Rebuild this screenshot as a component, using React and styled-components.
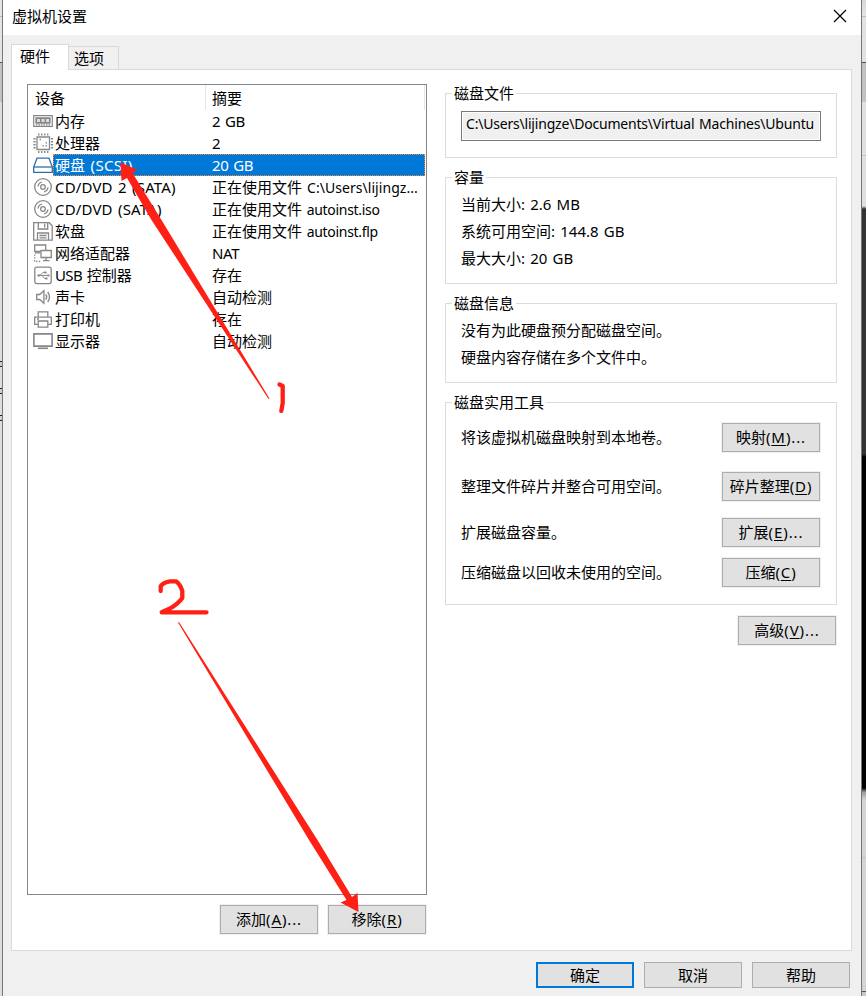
import React from 'react';
import styled, { createGlobalStyle, css } from 'styled-components';

const GlobalStyle = createGlobalStyle`
  * {
    box-sizing: border-box;
  }

  body {
    margin: 0;
    background: #e2e2e2;
    color: #000;
    font-family: 'Noto Sans CJK SC', sans-serif;
    font-size: 15px;
    line-height: 22px;
    white-space: nowrap;
  }
`;

const Desktop = styled.div`
  position: relative;
  display: flex;
  width: 866px;
  height: 996px;
  overflow: hidden;
`;

const LeftEdge = styled.div`
  flex: none;
  width: 3px;
  border-right: 1px solid #777;
  background: linear-gradient(
    #e4e4e4 0 16px, #bbb 16px 17px, #e4e4e4 17px 62px, #555 62px 63px,
    #c2c2c2 63px 102px, #dedede 102px 361px,
    #222 361px 362px, #bcd5d2 362px 366px, #222 366px 367px, #dedede 367px 388px,
    #222 388px 389px, #bcd5d2 389px 393px, #222 393px 394px, #dedede 394px 415px,
    #222 415px 416px, #bcd5d2 416px 420px, #222 420px 421px, #dedede 421px
  );
`;

const RightEdge = styled.div`
  flex: none;
  width: 5px;
  border-left: 1px solid #777;
  background: linear-gradient(
    #d8d8d8 0, #e4e4e4 16px, #bbb 16px 17px, #e2e2e2 17px 62px, #555 62px 63px,
    #c2c2c2 63px 102px, #e0e0e0 102px 155px, #c4c4c4 155px 156px, #e0e0e0 156px 206px,
    #333 209px 454px, #000 457px 788px, #999 792px, #d4d4d4 800px 857px,
    #c0c0c0 857px 858px, #d4d4d4 858px 991px, #555 991px 992px, #c8c8c8 992px
  );
`;

const Dialog = styled.div`
  display: flex;
  flex-direction: column;
  width: 858px;
  background: #f0f0f0;
`;

const TitleBar = styled.div`
  display: flex;
  justify-content: space-between;
  height: 35px;
  padding: 5px 14px 0 9px;
  background: #fff;
`;

const CloseIcon = styled.svg`
  width: 14px;
  height: 14px;
  margin-top: 4px;
`;

const Tabs = styled.div`
  display: flex;
  align-items: flex-end;
  height: 34px;
  padding-left: 8px;
`;

const Tab = styled.div`
  border: 1px solid #d9d9d9;
  border-bottom: none;
  ${(props) =>
    props.$active
      ? css`
          z-index: 1;
          width: 58px;
          height: 26px;
          margin-bottom: -1px;
          padding: 0 8px;
          background: #fff;
        `
      : css`
          width: 50px;
          height: 23px;
          padding: 0 5px;
          border-left: none;
        `}
`;

const Panel = styled.div`
  display: flex;
  gap: 18px;
  width: 841px;
  height: 882px;
  margin-left: 8px;
  padding: 14px 0 0 15px;
  border: 1px solid #d9d9d9;
  background: #fff;
`;

const DeviceColumn = styled.div`
  width: 400px;
`;

const DeviceList = styled.div`
  height: 811px;
  border: 1px solid #828790;
`;

const ListHeader = styled.div`
  display: flex;
  height: 25px;
  padding: 2px 0 0 7px;
  background: linear-gradient(#e5e5e5, #e5e5e5) 177px 0 / 1px 25px no-repeat,
    linear-gradient(#e5e5e5, #e5e5e5) 396px 0 / 1px 25px no-repeat;
`;

const HeaderCell = styled.span`
  width: ${(props) => props.$width}px;
`;

const Row = styled.div`
  display: flex;
  height: 22px;
  padding: 0 1px 0 5px;
`;

const DeviceIcon = styled.svg`
  flex: none;
  width: 21px;
  height: 22px;
  margin-right: -1px;
  fill: none;
  stroke: ${(props) => (props.$selected ? '#2f6fa8' : '#878787')};
  stroke-width: 1.3;
`;

const RowLabel = styled.div`
  display: flex;
  flex: 1;
  height: 22px;
  padding-left: 2px;
  line-height: 21px;
  ${(props) =>
    props.$selected &&
    css`
      color: #fff;
      background: #0078d7;
      outline: 1px dotted #ff8728;
      outline-offset: -1px;
    `}
`;

const DeviceName = styled.span`
  width: 157px;
`;

const Actions = styled.div`
  display: flex;
  justify-content: flex-end;
  gap: 10px;
  margin-top: ${(props) => props.$top}px;
  padding-right: 1px;
`;

const Button = styled.button`
  flex: none;
  width: 98px;
  height: ${(props) => (props.$footer ? 26 : 29)}px;
  padding: ${(props) => (props.$footer ? 0 : '0 0 2px')};
  border: ${(props) => (props.$primary ? '2px solid #0078d7' : '1px solid #adadad')};
  box-shadow: 0 0 0 1px #f0f0f0;
  background: #e1e1e1;
  color: #000;
  font: inherit;
  line-height: 20px;
`;

const Details = styled.div`
  display: flex;
  flex-direction: column;
  width: 392px;
  padding-top: 9px;
`;

const Group = styled.div`
  height: ${(props) => props.$height}px;
  margin-bottom: ${(props) => props.$gap}px;
  border: 1px solid #dcdcdc;
`;

const Legend = styled.div`
  width: fit-content;
  height: 22px;
  margin: -12px 0 0 6px;
  padding: 0 2px;
  background: #fff;
`;

const PathField = styled.div`
  width: 360px;
  height: 30px;
  margin: 7px 0 0 15px;
  padding: 0 4px;
  border: 1px solid #7a7a7a;
  box-shadow: inset 0 0 0 1px #fff;
  background: #f0f0f0;
`;

const InfoLine = styled.div`
  height: 27px;
  padding: 5px 0 0 15px;
  line-height: 21px;
`;

const ToolRow = styled.div`
  display: flex;
  align-items: center;
  justify-content: space-between;
  height: 29px;
  margin-top: ${(props) => props.$top}px;
  padding: 0 16px 0 15px;
`;

const ToolText = styled.span`
  padding-bottom: 2px;
`;

const Footer = styled.div`
  display: flex;
  justify-content: flex-end;
  gap: 10px;
  padding: 11px 11px 0 0;
`;

const Latin = styled.span`
  font-family: 'Noto Sans', sans-serif;
  font-size: ${(props) => props.$size || 15}px;
  line-height: 18px;
  letter-spacing: ${(props) => props.$spacing || 0}px;
  word-spacing: 1.3px;
`;

const Key = styled.span`
  text-decoration: underline;
  text-underline-offset: 2px;
`;

const Annotation = styled.svg`
  position: absolute;
  inset: 0;
  pointer-events: none;
`;

// Latin runs have their own face, size and spacing inside the Chinese text
function Text({ children, size, spacing }) {
  return children.split(/([\x20-\x7e]+)/).map((part, index) =>
    /^[\x20-\x7e]+$/.test(part) ? (
      <Latin key={index} $size={size} $spacing={spacing}>
        {part}
      </Latin>
    ) : (
      part
    )
  );
}

function KeyButton({ label, hotkey, more, ...props }) {
  return (
    <Button {...props}>
      {label}
      {hotkey && (
        <Latin $spacing={0.9}>
          (<Key>{hotkey}</Key>){more && '...'}
        </Latin>
      )}
    </Button>
  );
}

const disc = (
  <>
    <circle cx="10" cy="11" r="8.3" />
    <circle cx="10" cy="11" r="2.3" />
    <path d="M5 10.5Q5.5 7 9 6M15 11.5Q14.5 15 11 16" />
  </>
);

const icons = {
  memory: (
    <>
      <path d="M.7 5.7h18.6v10.6H.7z" strokeWidth="1.2" />
      <path d="M3 8h14v5H3z" fill="#878787" />
      <path d="M4 9h3v3H4zM8.5 9h3v3h-3zM13 9h3v3h-3z" fill="#ddd" stroke="none" />
      <path d="M3 14.8h14" strokeDasharray="1.5 1" />
    </>
  ),
  cpu: (
    <>
      <path d="M4 5h12.5v12.5H4z" />
      <path d="M5 2.5h11M5 20h11M1.5 6v11M19 6v11" strokeWidth="2.2" strokeDasharray="1.4 1.6" />
      <path d="M6.5 7.5h1.5M12.5 13.8H14M12.5 10.8H14M9.5 13.8H11" />
    </>
  ),
  hdd: (
    <>
      <path d="M4 4.2h12L19.3 13v5.3H.7V13z" fill="#fff" />
      <path d="M.7 13h18.6" />
    </>
  ),
  disc,
  floppy: (
    <>
      <path d="M.7 2.7h15.5l3 3v14.5H.7z" />
      <path d="M5.3 3v6h9.4V3M11.7 3.5v4M4.5 20v-7h11v7M6.5 15.5h7M6.5 17.8h7" />
    </>
  ),
  network: (
    <>
      <path d="M1.7 3h11v6.5h-11z" />
      <path d="M8 8.5h10.3v7H8z" fill="#fff" />
      <path d="M13 16v2.3M10 18.7h6.5M2 10.8h5" />
      <path d="M1.7 12.5v7h7" strokeDasharray="1.3 1.5" />
    </>
  ),
  usb: (
    <>
      <rect x="1.8" y="3.2" width="16.4" height="16.4" rx="2" />
      <path d="M5 11.4h10M7 11.4l3-3h2M9 11.4l2.5 3h1.5" strokeWidth="1" />
      <path d="M3.8 11.4 6.5 9.8v3.2zM11.5 7.5h2v2h-2zM12.5 13.5h2v2h-2zM14.5 10.4h2v2h-2z" fill="#878787" stroke="none" />
    </>
  ),
  sound: (
    <>
      <path d="M3.7 8.5h3l4.2-3.8v12.6L6.7 13.5h-3z" />
      <path d="M12.7 8.3q2 2.7 0 5.4M14.7 6q3.6 5 0 10" />
    </>
  ),
  printer: (
    <>
      <path d="M5.2 9V3.8h9.6V9M5 16.3H1.7V9.2h16.6v7.1H15" />
      <path d="M5.2 13h9.6v6.2H5.2zM4 11h2" />
    </>
  ),
  display: (
    <>
      <path d="M.9 3.9h18.2v12.2H.9z" strokeWidth="1.6" />
      <path d="M5 18.3h10" strokeWidth="1.6" />
    </>
  ),
};

const devices = [
  { icon: 'memory', name: '内存', summary: '2 GB' },
  { icon: 'cpu', name: '处理器', summary: '2' },
  { icon: 'hdd', name: '硬盘 (SCSI)', summary: '20 GB', selected: true },
  { icon: 'disc', name: 'CD/DVD 2 (SATA)', summary: '正在使用文件 C:\\Users\\lijingz...', size: 14, spacing: 0.05 },
  { icon: 'disc', name: 'CD/DVD (SATA)', summary: '正在使用文件 autoinst.iso', size: 14, spacing: -0.3 },
  { icon: 'floppy', name: '软盘', summary: '正在使用文件 autoinst.flp', size: 14, spacing: -0.3 },
  { icon: 'network', name: '网络适配器', summary: 'NAT' },
  { icon: 'usb', name: 'USB 控制器', summary: '存在' },
  { icon: 'sound', name: '声卡', summary: '自动检测' },
  { icon: 'printer', name: '打印机', summary: '存在' },
  { icon: 'display', name: '显示器', summary: '自动检测' },
];

// Letter spacing of the names whose Latin part is long or narrow
const nameSpacing = { hdd: 0.35, disc: 0.15, usb: -0.6 };

const tools = [
  { text: '将该虚拟机磁盘映射到本地卷。', label: '映射', hotkey: 'M', more: true, top: 10 },
  { text: '整理文件碎片并整合可用空间。', label: '碎片整理', hotkey: 'D', top: 20 },
  { text: '扩展磁盘容量。', label: '扩展', hotkey: 'E', more: true, top: 17 },
  { text: '压缩磁盘以回收未使用的空间。', label: '压缩', hotkey: 'C', top: 11 },
];

function App() {
  return (
    <Desktop>
      <GlobalStyle />
      <LeftEdge />
      <Dialog>
        <TitleBar>
          虚拟机设置
          <CloseIcon viewBox="0 0 14 14">
            <path d="M1 1l12 12M13 1L1 13" stroke="#000" strokeWidth="1.2" />
          </CloseIcon>
        </TitleBar>
        <Tabs>
          <Tab $active>硬件</Tab>
          <Tab>选项</Tab>
        </Tabs>
        <Panel>
          <DeviceColumn>
            <DeviceList>
              <ListHeader>
                <HeaderCell $width={177}>设备</HeaderCell>
                <HeaderCell $width={180}>摘要</HeaderCell>
              </ListHeader>
              {devices.map((device) => (
                <Row key={device.name}>
                  <DeviceIcon viewBox="0 0 21 22" $selected={device.selected}>
                    {icons[device.icon]}
                  </DeviceIcon>
                  <RowLabel $selected={device.selected}>
                    <DeviceName>
                      <Text spacing={nameSpacing[device.icon]}>{device.name}</Text>
                    </DeviceName>
                    <span>
                      <Text size={device.size} spacing={device.spacing || -0.4}>
                        {device.summary}
                      </Text>
                    </span>
                  </RowLabel>
                </Row>
              ))}
            </DeviceList>
            <Actions $top={10}>
              <KeyButton label="添加" hotkey="A" more />
              <KeyButton label="移除" hotkey="R" />
            </Actions>
          </DeviceColumn>
          <Details>
            <Group $height={65} $gap={19}>
              <Legend>磁盘文件</Legend>
              <PathField>
                <Text size={14} spacing={-0.2}>
                  {'C:\\Users\\lijingze\\Documents\\Virtual Machines\\Ubuntu'}
                </Text>
              </PathField>
            </Group>
            <Group $height={107} $gap={19}>
              <Legend>容量</Legend>
              <InfoLine>
                <Text>当前大小: 2.6 MB</Text>
              </InfoLine>
              <InfoLine>
                <Text>系统可用空间: 144.8 GB</Text>
              </InfoLine>
              <InfoLine>
                <Text>最大大小: 20 GB</Text>
              </InfoLine>
            </Group>
            <Group $height={80} $gap={19}>
              <Legend>磁盘信息</Legend>
              <InfoLine>没有为此硬盘预分配磁盘空间。</InfoLine>
              <InfoLine>硬盘内容存储在多个文件中。</InfoLine>
            </Group>
            <Group $height={203} $gap={11}>
              <Legend>磁盘实用工具</Legend>
              {tools.map(({ text, top, ...button }) => (
                <ToolRow key={text} $top={top}>
                  <ToolText>{text}</ToolText>
                  <KeyButton {...button} />
                </ToolRow>
              ))}
            </Group>
            <Actions $top={0}>
              <KeyButton label="高级" hotkey="V" more />
            </Actions>
          </Details>
        </Panel>
        <Footer>
          <KeyButton label="确定" $footer $primary />
          <KeyButton label="取消" $footer />
          <KeyButton label="帮助" $footer />
        </Footer>
      </Dialog>
      <RightEdge />
      <Annotation width="866" height="996" viewBox="0 0 866 996">
        <g fill="#ff2015">
          <path d="M120.5 162.5L137.5 170L132.5 173L161.5 220L269.5 398.5L268.5 399L151.5 220L127 178L121.5 181Z" />
          <path d="M358.5 912L340.5 902.5L346.5 900L309 840L178 622.5L179 622L317.5 840L352 897L357.5 893Z" />
        </g>
        <g fill="none" stroke="#ff2015" strokeWidth="4.3" strokeLinecap="round" strokeLinejoin="round">
          <path d="M279.5 384.5L282.7 386V403L281.3 411" />
          <path d="M160.7 591V586Q164 582 170 581.3H176Q180 584 182.3 591V598Q178 604 170 608.5L161.7 612.3H206.5" />
        </g>
      </Annotation>
    </Desktop>
  );
}

export default App;
